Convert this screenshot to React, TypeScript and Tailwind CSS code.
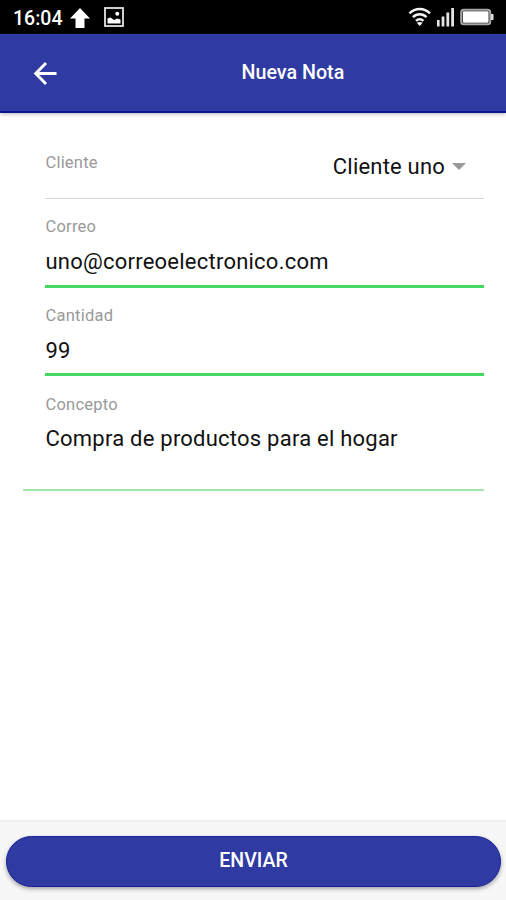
import { useState } from "react";

// Status bar glyphs
function UploadIcon() {
  return (
    <svg className="mt-[2px] ml-[5px] h-5 w-[22px]" viewBox="0 0 22 20" fill="#fff">
      <path d="M11 0 21 10.5H15.5V20H6.5V10.5H1Z" />
    </svg>
  );
}

function PictureIcon() {
  return (
    <svg className="ml-[13px] h-5 w-5" viewBox="0 0 20 20">
      <rect x="1" y="1" width="18" height="18" fill="none" stroke="#e4e4e4" strokeWidth="1.8" />
      <path d="M3.5 16.5V11.5L6.5 10.5 10 13 13 11.5 16.5 12.5V16.5Z" fill="#fff" />
      <circle cx="13.3" cy="6.8" r="2" fill="#fff" />
    </svg>
  );
}

function WifiIcon() {
  return (
    <svg className="h-5 w-6" viewBox="0 0 24 20" fill="none" stroke="#f2f2f2" strokeWidth="2.5">
      <path d="M1.4 6.3C7.3 0.4 16.1 0.4 22 6.3" />
      <path d="M4.9 10.2C8.8 6.3 14.6 6.3 18.5 10.2" />
      <path d="M8 13.9C10.2 11.8 13.2 11.8 15.4 13.9" />
      <path d="M8.7 15.8 11.7 19 14.7 15.8C13 14.6 10.4 14.6 8.7 15.8Z" fill="#f2f2f2" stroke="none" />
    </svg>
  );
}

function SignalIcon() {
  return (
    <svg className="ml-[5px] h-5 w-[18px]" viewBox="0 0 18 20" fill="#e4e4e4">
      <rect x="0" y="13" width="2.6" height="6.5" />
      <rect x="4.6" y="9.5" width="2.8" height="10" />
      <rect x="9.4" y="5.5" width="2.8" height="14" />
      <rect x="14.2" y="1" width="2.8" height="18.5" />
    </svg>
  );
}

function BatteryIcon() {
  return (
    <svg className="ml-[5px] h-5 w-[34px]" viewBox="0 0 34 20">
      <rect x="1.2" y="2.7" width="29" height="14.6" rx="2.5" fill="none" stroke="#a8a8a8" strokeWidth="2" />
      <rect x="2.8" y="4.3" width="25.8" height="11.4" rx="1" fill="#fff" />
      <path d="M31 7H33.5V13H31Z" fill="#ddd" />
    </svg>
  );
}

function StatusBar() {
  return (
    <div className="flex h-[34px] items-center justify-between bg-black pr-[12px] pl-[13px] text-white">
      <div className="flex items-center">
        <span className="w-[51px] pt-[3px] text-[19.5px] leading-none font-medium whitespace-nowrap">16:04</span>
        <UploadIcon />
        <PictureIcon />
      </div>
      <div className="flex items-center">
        <WifiIcon />
        <SignalIcon />
        <BatteryIcon />
      </div>
    </div>
  );
}

function Header() {
  return (
    <header className="z-10 flex h-[79px] items-center border-b-2 border-[#0b1491] bg-[#2f3ba2] shadow-[0_1px_4px_rgba(0,0,0,0.3)]">
      <button aria-label="Volver" className="ml-[33px] h-6 w-6">
        <svg viewBox="0 0 24 24" fill="none" stroke="#fff" strokeWidth="2.9">
          <path d="M23.5 12.5H3M13 2 2.7 12.5 13 23" />
        </svg>
      </button>
      <h1 className="ml-[184.5px] pt-px text-[19.7px] leading-none font-medium text-white">Nueva Nota</h1>
    </header>
  );
}

type FieldProps = {
  label: string;
  value: string;
  onChange: (value: string) => void;
};

function Field({ label, value, onChange }: FieldProps) {
  return (
    <label className="ml-[45px] flex h-[88.5px] flex-col border-b-[3px] border-[#45d862] pt-[18px] pl-[0.5px]">
      <span className="text-[16.5px] leading-5 tracking-[0.23px] text-[#999]">{label}</span>
      <input
        className="mt-[9.5px] h-[30px] text-[22px] tracking-[0.23px] text-[#111] outline-none"
        value={value}
        onChange={(e) => onChange(e.target.value)}
      />
    </label>
  );
}

export default function App() {
  const [correo, setCorreo] = useState("uno@correoelectronico.com");
  const [cantidad, setCantidad] = useState("99");
  const [concepto, setConcepto] = useState("Compra de productos para el hogar");

  return (
    <div className="flex h-[900px] w-[506px] flex-col bg-white font-['Roboto',sans-serif]">
      <StatusBar />
      <Header />

      <main className="flex-1 pr-[22px]">
        <div className="ml-[45px] flex h-[86px] justify-between border-b border-[#d8d8d8] pl-[0.5px]">
          <span className="mt-[40px] text-[16.5px] leading-5 tracking-[0.2px] text-[#999]">Cliente</span>
          <button className="mt-[38px] mr-[18px] flex h-[30px] items-center gap-[7px] text-[22px] tracking-[0.2px] text-[#111]">
            Cliente uno
            <svg className="h-[7px] w-[14px]" viewBox="0 0 14 7" fill="#999">
              <path d="M0 0H14L7 7Z" />
            </svg>
          </button>
        </div>
        <Field label="Correo" value={correo} onChange={setCorreo} />
        <Field label="Cantidad" value={cantidad} onChange={setCantidad} />
        <label className="ml-[23px] flex h-[115px] flex-col border-b-2 border-[#a4e5ac] pt-[19px] pl-[22.5px]">
          <span className="text-[16.5px] leading-5 tracking-[0.23px] text-[#999]">Concepto</span>
          <textarea
            className="mt-[9px] h-[50px] resize-none overflow-hidden text-[22px] leading-[30px] tracking-[0.23px] text-[#111] outline-none"
            value={concepto}
            onChange={(e) => setConcepto(e.target.value)}
          />
        </label>
      </main>

      <footer className="h-20 border-t-2 border-[#eee] bg-[#f7f7f7] pt-[14px] pr-[5px] pl-[6px]">
        <button className="h-[51px] w-full rounded-full border border-[#17219a] bg-[#2f3ba2] pb-px text-[19.5px] font-medium text-white shadow-[0_2px_4px_rgba(0,0,0,0.35)]">
          ENVIAR
        </button>
      </footer>
    </div>
  );
}
